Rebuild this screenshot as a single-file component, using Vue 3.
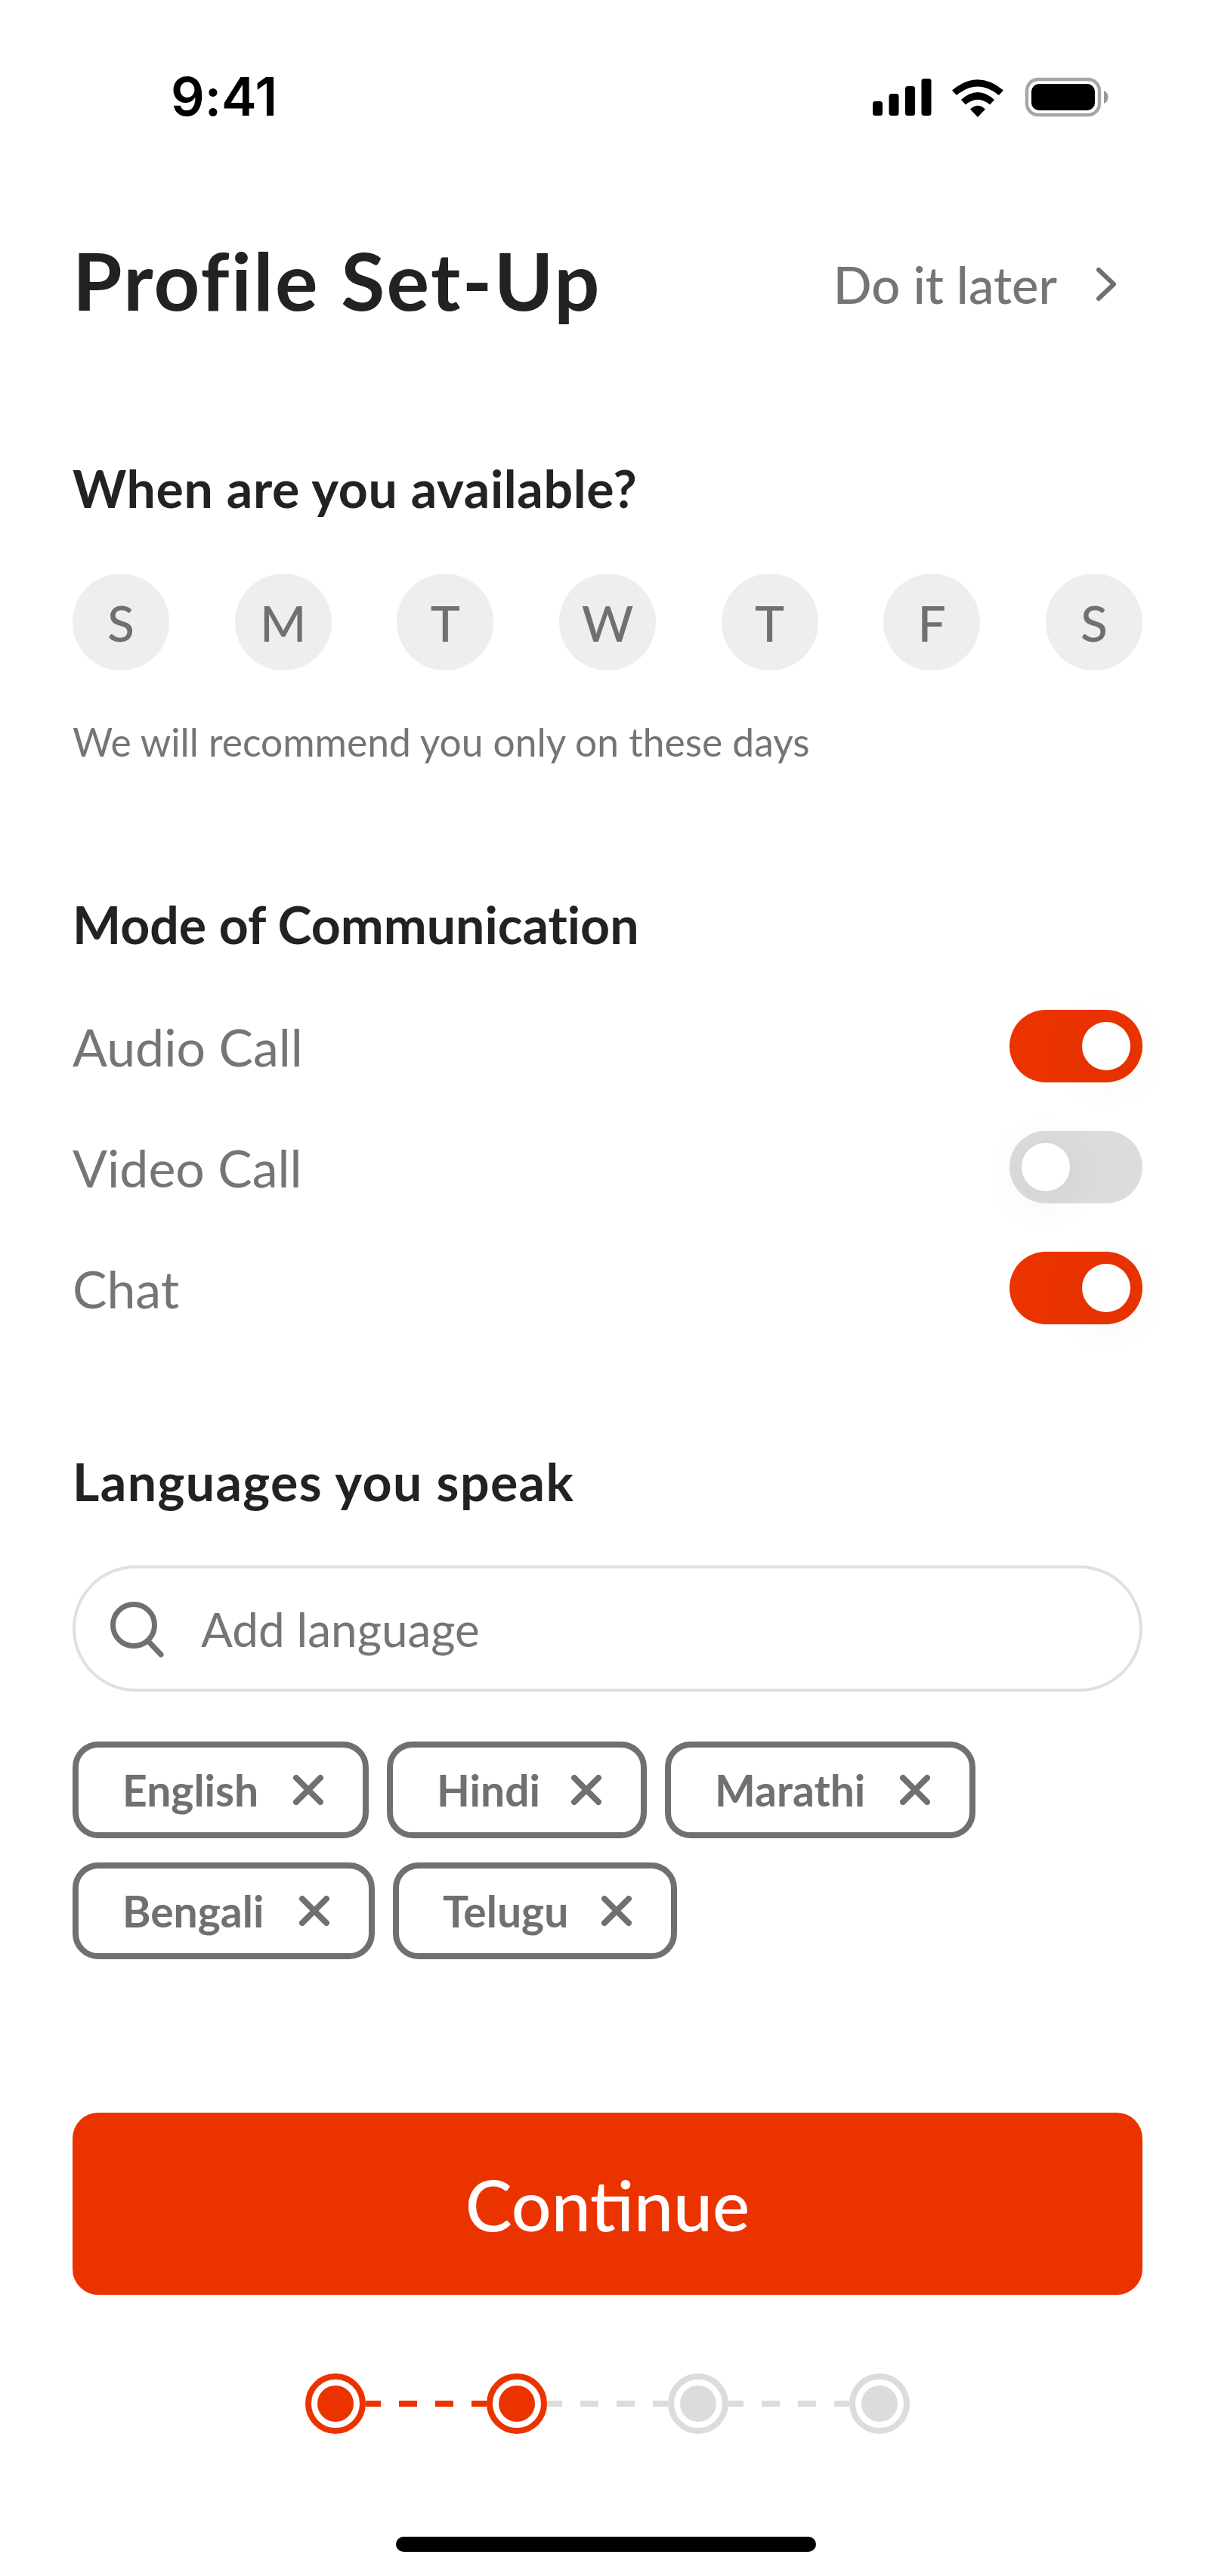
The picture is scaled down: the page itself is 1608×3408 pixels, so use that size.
<script setup>
const days = ['S', 'M', 'T', 'W', 'T', 'F', 'S']

const modes = [
  { label: 'Audio Call', on: true },
  { label: 'Video Call', on: false },
  { label: 'Chat', on: true }
]

const languages = [
  { name: 'English', width: 392 },
  { name: 'Hindi', width: 344 },
  { name: 'Marathi', width: 411 },
  { name: 'Bengali', width: 400 },
  { name: 'Telugu', width: 376 }
]

const steps = [true, true, false, false]
const links = [true, false, false]
</script>

<template>
  <div class="screen">
    <!-- Status bar -->
    <div class="status-bar">
      <span class="clock">9:41</span>
      <svg class="status-icons" width="312" height="54" viewBox="0 0 312 54">
        <rect x="0" y="32" width="13" height="19" rx="3.5" fill="#000" />
        <rect x="21.5" y="22" width="13" height="29" rx="3.5" fill="#000" />
        <rect x="43" y="12" width="13" height="39" rx="3.5" fill="#000" />
        <rect x="64.5" y="2" width="13" height="49" rx="3.5" fill="#000" />
        <path d="M105 17.5 Q139 -11 173 17.5 L167 24 Q139 1 111 24 Z" fill="#000" />
        <path d="M117 30 Q139 10 161 30 L155 36.5 Q139 23 123 36.5 Z" fill="#000" />
        <path d="M129 42.5 Q139 33 149 42.5 L139 53 Z" fill="#000" />
        <rect x="204" y="3" width="96" height="47" rx="15" fill="none" stroke="#000" stroke-opacity="0.35" stroke-width="4.4" />
        <rect x="210" y="9" width="84" height="35" rx="10" fill="#000" />
        <path d="M306 18 C310 19.5 311.5 23 311.5 26.5 C311.5 30 310 33.5 306 35 Z" fill="#000" fill-opacity="0.4" />
      </svg>
    </div>

    <div class="page-head">
      <h1 class="title">Profile Set-Up</h1>
      <div class="later">
        <span>Do it later</span>
        <svg width="30" height="46" viewBox="0 0 30 46">
          <path d="M5 4 L25 23 L5 42" fill="none" stroke="#707070" stroke-width="6" stroke-linecap="round" stroke-linejoin="round" />
        </svg>
      </div>
    </div>

    <section class="availability">
      <h2 class="heading">When are you available?</h2>
      <div class="days">
        <div v-for="(day, i) in days" :key="i" class="day">{{ day }}</div>
      </div>
      <p class="hint">We will recommend you only on these days</p>
    </section>

    <section class="communication">
      <h2 class="heading">Mode of Communication</h2>
      <div class="modes">
        <div v-for="mode in modes" :key="mode.label" class="mode">
          <span>{{ mode.label }}</span>
          <div class="toggle" :class="{ on: mode.on }">
            <div class="knob"></div>
          </div>
        </div>
      </div>
    </section>

    <section class="languages">
      <h2 class="heading">Languages you speak</h2>
      <div class="search">
        <svg width="76" height="76" viewBox="0 0 76 76">
          <circle cx="33" cy="33" r="27.5" fill="none" stroke="#707070" stroke-width="7" />
          <path d="M52 54 L69 72" fill="none" stroke="#707070" stroke-width="7" stroke-linecap="round" />
        </svg>
        <span>Add language</span>
      </div>
      <div class="chips">
        <div v-for="lang in languages" :key="lang.name" class="chip" :style="{ width: lang.width + 'px' }">
          <span>{{ lang.name }}</span>
          <svg width="40" height="40" viewBox="0 0 40 40">
            <path d="M4 4 L36 36 M36 4 L4 36" fill="none" stroke="#707070" stroke-width="8" stroke-linecap="round" />
          </svg>
        </div>
      </div>
    </section>

    <button class="continue">Continue</button>

    <!-- Progress steps -->
    <div class="stepper">
      <template v-for="(done, i) in steps" :key="i">
        <div class="step" :class="{ done }"><div class="step-dot"></div></div>
        <svg v-if="i < links.length" class="link" width="160" height="8" viewBox="0 0 160 8">
          <line x1="0" y1="4" x2="160" y2="4" :stroke="links[i] ? '#eb3300' : '#dcdcdc'" stroke-width="8" stroke-dasharray="20 24 24 24 24 24 20" />
        </svg>
      </template>
    </div>

    <div class="home-bar"></div>
  </div>
</template>

<style scoped>
.screen {
  width: 1608px;
  height: 3408px;
  box-sizing: border-box;
  background: #fff;
  padding: 0 96px;
  font-family: Lato, "Noto Sans", sans-serif;
  font-variant-ligatures: none;
  color: #707070;
  overflow: hidden;
}

.status-bar {
  height: 100px;
  padding-top: 102px;
  display: flex;
  justify-content: space-between;
  align-items: flex-start;
  padding-left: 130px;
  padding-right: 45px;
  box-sizing: content-box;
}

.clock {
  font-family: Inter, sans-serif;
  font-weight: 600;
  font-size: 70px;
  line-height: 52px;
  color: #000;
}

.status-icons {
  display: block;
  flex-shrink: 0;
}

.page-head {
  margin-top: 106px;
  height: 124px;
  display: flex;
  justify-content: space-between;
  align-items: center;
}

.title {
  margin: 0;
  font-size: 106px;
  line-height: 124px;
  font-weight: 700;
  letter-spacing: 2.4px;
  color: #222;
}

.later {
  display: flex;
  align-items: center;
  gap: 50px;
  margin-right: 33px;
  padding-top: 11px;
  font-size: 67px;
  font-weight: 500;
  color: #757575;
}

.later svg {
  display: block;
}

.heading {
  margin: 0;
  font-size: 68px;
  line-height: 84px;
  font-weight: 700;
  color: #222;
}

.availability {
  margin-top: 172px;
}

.availability .heading {
  letter-spacing: 0.65px;
}

.days {
  margin-top: 71px;
  display: flex;
  justify-content: space-between;
}

.day {
  width: 128px;
  height: 128px;
  border-radius: 50%;
  background: #eee;
  display: flex;
  align-items: center;
  justify-content: center;
  font-size: 66px;
  font-weight: 500;
  color: #707070;
}

.hint {
  margin: 60px 0 0;
  font-size: 51.5px;
  line-height: 68px;
  color: #757575;
}

.communication {
  margin-top: 166px;
}

.modes {
  margin-top: 71px;
  display: flex;
  flex-direction: column;
  gap: 64px;
}

.mode {
  display: flex;
  justify-content: space-between;
  align-items: center;
  font-size: 68px;
  color: #757575;
}

.toggle {
  width: 176px;
  height: 96px;
  border-radius: 48px;
  background: #dcdcdc;
  box-sizing: border-box;
  padding: 16px;
  display: flex;
  justify-content: flex-start;
}

.toggle.on {
  background: #eb3300;
  justify-content: flex-end;
}

.knob {
  width: 64px;
  height: 64px;
  border-radius: 50%;
  background: #fff;
  box-shadow: 0 8px 64px rgba(0, 0, 0, 0.08);
}

.languages {
  margin-top: 166px;
}

.languages .heading {
  letter-spacing: 1.4px;
}

.search {
  margin-top: 69px;
  height: 167px;
  box-sizing: border-box;
  border: 4px solid #e0e0e0;
  border-radius: 84px;
  padding-left: 44px;
  display: flex;
  align-items: center;
  gap: 46px;
  font-size: 62px;
  color: #757575;
}

.search svg {
  display: block;
}

.chips {
  margin-top: 66px;
  width: 1260px;
  display: flex;
  flex-wrap: wrap;
  column-gap: 24px;
  row-gap: 32px;
}

.chip {
  height: 128px;
  box-sizing: border-box;
  border: 8px solid #707070;
  border-radius: 34px;
  padding: 0 52px 0 58px;
  display: flex;
  align-items: center;
  justify-content: space-between;
  font-size: 57px;
  font-weight: 700;
  color: #707070;
}

.chip svg {
  display: block;
}

.continue {
  display: block;
  width: 100%;
  height: 241px;
  margin-top: 203px;
  border: none;
  border-radius: 34px;
  background: #eb3300;
  color: #fff;
  font-family: inherit;
  font-size: 93px;
  font-weight: 500;
}

.stepper {
  margin-top: 104px;
  display: flex;
  justify-content: center;
  align-items: center;
}

.step {
  width: 80px;
  height: 80px;
  box-sizing: border-box;
  border: 8px solid #dcdcdc;
  border-radius: 50%;
  padding: 8px;
}

.step-dot {
  width: 48px;
  height: 48px;
  border-radius: 50%;
  background: #dcdcdc;
}

.step.done {
  border-color: #eb3300;
}

.step.done .step-dot {
  background: #eb3300;
}

.link {
  display: block;
}

.home-bar {
  width: 556px;
  height: 20px;
  margin: 136px auto 0;
  transform: translateX(-2px);
  border-radius: 10px;
  background: #000;
}
</style>

<style>
body {
  margin: 0;
  background: #fff;
}
</style>
